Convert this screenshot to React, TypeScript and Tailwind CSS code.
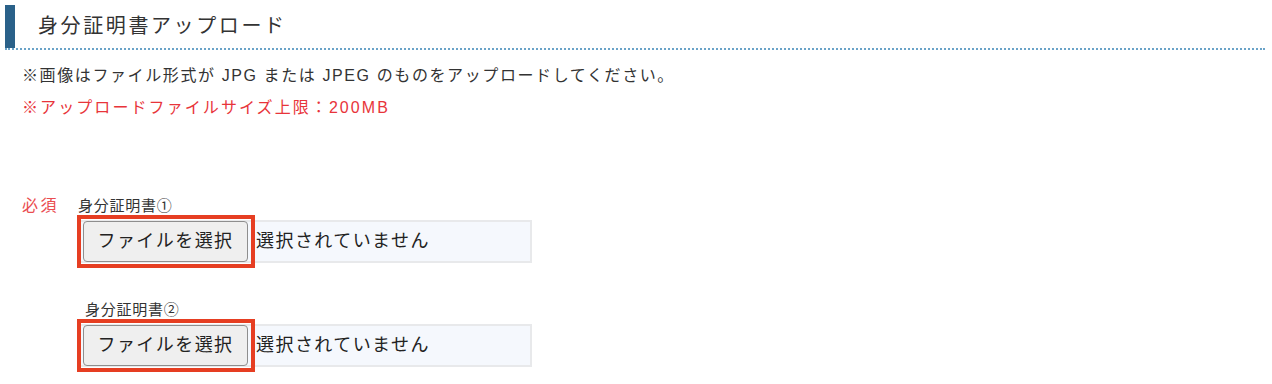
import React from "react";

const FONT = '"Liberation Sans", "Noto Sans CJK JP", sans-serif';

function FileField() {
  return (
    <div className="relative w-[453px] h-[43px] border-2 border-[#e8e9eb] bg-[#f5f8fd] flex items-center pl-[2px]">
      <button
        type="button"
        className="w-[165px] h-[41px] border border-[#8e8e8e] rounded-[4px] bg-[#efefef] text-[#222] text-[18px] tracking-[0.08em] flex items-center justify-center"
        style={{ fontFamily: FONT }}
      >
        ファイルを選択
      </button>
      <span className="ml-[8px] text-[18px] tracking-[0.08em] text-[#222]">選択されていません</span>
      <div className="absolute left-[-4px] top-[-7px] w-[178px] h-[53px] border-[4px] border-[#e63e22] pointer-events-none" />
    </div>
  );
}

export default function App() {
  return (
    <div className="w-[1272px] h-[384px] bg-white overflow-hidden text-[#333]" style={{ fontFamily: FONT }}>
      <div className="pt-[5px] pl-[5px]">
        <div className="w-[1260px] flex items-center border-b-2 border-dotted border-[#6aa3c8]">
          <div className="w-[10px] h-[43px] bg-[#2a6189]" />
          <h1 className="ml-[23px] text-[20px] tracking-[0.13em] leading-[43px] text-[#333]">身分証明書アップロード</h1>
        </div>
      </div>
      <div className="pl-[22px] pt-[10px] text-[16px] leading-[32px]">
        <p className="text-[#333] tracking-[0.1em]">※画像はファイル形式が JPG または JPEG のものをアップロードしてください。</p>
        <p className="text-[#e8343a] tracking-[0.13em]">※アップロードファイルサイズ上限：200MB</p>
      </div>
      <div className="flex pl-[22px] pt-[72px]">
        <div className="w-[56px] text-[16px] leading-[20px] tracking-[0.15em] text-[#ea4d50]">必須</div>
        <div className="flex flex-col">
          <div className="text-[15px] leading-[20px] tracking-[0.05em] text-[#333]">身分証明書①</div>
          <div className="mt-[4px] ml-[1px]">
            <FileField />
          </div>
          <div className="mt-[37px] pl-[7px] text-[15px] leading-[20px] tracking-[0.05em] text-[#333]">身分証明書②</div>
          <div className="mt-[4px] ml-[1px]">
            <FileField />
          </div>
        </div>
      </div>
    </div>
  );
}
